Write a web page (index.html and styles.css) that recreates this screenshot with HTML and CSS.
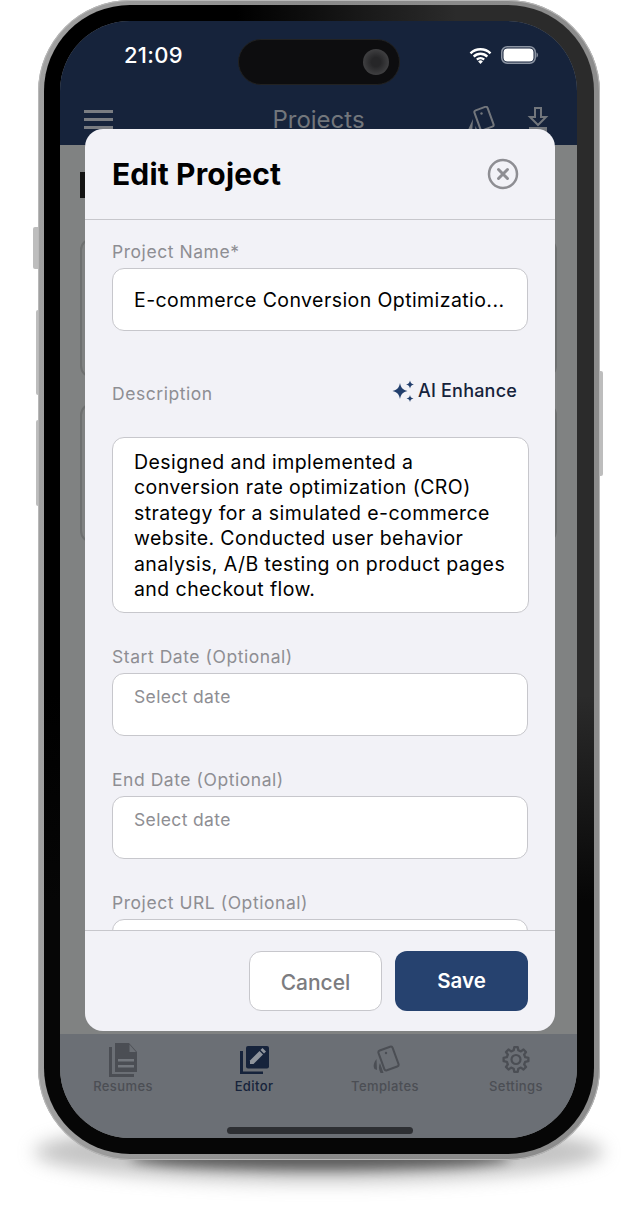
FILE: index.html
```html
<!DOCTYPE html>
<html lang="en">
<head>
<meta charset="utf-8">
<title>Edit Project</title>
<link rel="stylesheet" href="styles.css">
</head>
<body>
<div class="stage">
  <div class="floor-shadow"></div>
  <div class="floor-shadow-core"></div>
  <div class="side-btn btn-a"></div>
  <div class="side-btn btn-b"></div>
  <div class="side-btn btn-c"></div>
  <div class="side-btn btn-d"></div>
  <div class="phone">
    <div class="bezel">
      <div class="screen">
        <div class="navy">
          <div class="status">
            <span class="time">21:09</span>
            <div class="status-icons">
              <svg width="23" height="17" viewBox="0 0 23 17"><path d="M1.500 6.300a14.200 14.200 0 0 1 20 0M4.700 9.600a9.500 9.500 0 0 1 13.600 0M7.900 12.700a5 5 0 0 1 7.200 0" fill="none" stroke="#fff" stroke-width="2.400"/><path d="M11.500 17l-2.400-2.600a3.400 3.400 0 0 1 4.800 0z" fill="#fff"/></svg>
              <svg width="37" height="18" viewBox="0 0 37 18"><rect x="0.750" y="0.750" width="33.500" height="16.500" rx="5.500" fill="none" stroke="#8d95a3" stroke-width="1.500"/><rect x="2.500" y="2.500" width="30" height="13" rx="4" fill="#fff"/><path d="M35.500 6.500c1.900.5 1.900 4.500 0 5z" fill="#8d95a3"/></svg>
            </div>
          </div>
          <div class="island"><span class="lens"></span></div>
          <div class="appbar">
            <span class="burger"><i></i><i></i><i></i></span>
            <span class="appbar-title">Projects</span>
            <div class="appbar-icons">
              <svg width="30" height="30" viewBox="0 0 30 30"><rect x="-7" y="-10.500" width="14" height="21" rx="2" transform="translate(19 12.500) rotate(-20)" fill="none" stroke="#72767c" stroke-width="2"/><circle cx="16.500" cy="7.500" r="1.200" fill="#72767c"/><path d="M8 13l-6 13 5 2zM10.500 20l-1 8 4.500 0z" fill="#72767c"/></svg>
              <svg width="22" height="30" viewBox="0 0 22 30"><path d="M8 2h6v9h5l-8 8-8-8h5z" fill="none" stroke="#72767c" stroke-width="2"/><path d="M2 21h18v5H2z" fill="#72767c"/></svg>
            </div>
          </div>
        </div>
        <div class="page">
          <div class="page-title"></div>
          <div class="bg-card"></div>
          <div class="bg-card"></div>
        </div>
        <nav class="tabbar">
          <div class="tab">
            <svg width="30" height="34" viewBox="0 0 30 34"><path d="M1 4v30h25v-3H4V4z" fill="#4b4e54"/><path d="M7 0h14l8 9v20H7z" fill="#4b4e54"/><path d="M21.500 1.500v7.500h6.500z" fill="#6b6f75"/><path d="M10 16h16v2.500H10zM10 22h16v2.500H10z" fill="#73777d"/></svg>
            <span>Resumes</span>
          </div>
          <div class="tab tab-on">
            <svg width="30" height="34" viewBox="0 0 30 34"><path d="M1 8v23h23v-2.500H4V8z" fill="#16233b"/><rect x="7" y="3" width="23" height="22.500" rx="2" fill="#16233b"/><path d="M11 21v-3.500l9.500-9.500 3.500 3.500-9.500 9.500z" fill="#8f949c"/><path d="M21.500 7l2-2 3.500 3.500-2 2z" fill="#8f949c"/></svg>
            <span>Editor</span>
          </div>
          <div class="tab">
            <svg width="30" height="34" viewBox="0 0 30 34"><rect x="-7.500" y="-10.500" width="15" height="21" rx="2" transform="translate(18.500 15.500) rotate(-20)" fill="none" stroke="#4b4e54" stroke-width="2"/><circle cx="16" cy="10" r="1.200" fill="#4b4e54"/><path d="M6.500 16c-3 4-3.500 7-2 10l2.500 1zM10 20c-1.500 3-1.500 6 .5 10l3 0z" fill="#4b4e54"/></svg>
            <span>Templates</span>
          </div>
          <div class="tab">
            <svg width="30" height="34" viewBox="0 0 30 34"><g transform="translate(15 16.500)"><polygon points="1.740,-12.380 2.300,-9.220 4.890,-8.140 7.520,-9.980 9.980,-7.520 8.140,-4.890 9.220,-2.300 12.380,-1.740 12.380,1.740 9.220,2.300 8.140,4.890 9.980,7.520 7.520,9.980 4.890,8.140 2.300,9.220 1.740,12.380 -1.740,12.380 -2.300,9.220 -4.890,8.140 -7.520,9.980 -9.980,7.520 -8.140,4.890 -9.220,2.300 -12.380,1.740 -12.380,-1.740 -9.220,-2.300 -8.140,-4.890 -9.980,-7.520 -7.520,-9.980 -4.890,-8.140 -2.300,-9.220 -1.740,-12.380" fill="none" stroke="#4b4e54" stroke-width="2.300" stroke-linejoin="round"/><circle r="4.500" fill="none" stroke="#4b4e54" stroke-width="2.200"/></g></svg>
            <span>Settings</span>
          </div>
        </nav>
        <div class="home-bar"></div>
      </div>
    </div>
  </div>
  <section class="modal">
    <header class="modal-head">
      <h1>Edit Project</h1>
      <svg width="32" height="32" viewBox="0 0 32 32"><circle cx="16" cy="16" r="14" fill="none" stroke="#8e8e93" stroke-width="2.500"/><path d="M11.500 11.500l9 9m0-9l-9 9" stroke="#8e8e93" stroke-width="3" stroke-linecap="round"/></svg>
    </header>
    <div class="modal-body">
      <label class="label">Project Name*</label>
      <div class="field field-name">E-commerce Conversion Optimizatio...</div>
      <div class="desc-row">
        <label class="label">Description</label>
        <span class="enhance">
          <svg width="24" height="24" viewBox="0 0 24 24"><path d="M9 4c1 5 3 7 7.500 8-4.500 1-6.500 3-7.500 8-1-5-3-7-7.500-8 4.500-1 6.500-3 7.500-8z" fill="#223f6d"/><path d="M19 1.500c.5 2.500 1.500 3.500 4 4-2.500.5-3.500 1.500-4 4-.5-2.500-1.500-3.500-4-4 2.500-.5 3.500-1.500 4-4zM19 16c.5 2.200 1.300 3 3.500 3.500-2.200.5-3 1.300-3.500 3.500-.5-2.200-1.300-3-3.500-3.500 2.200-.5 3-1.300 3.500-3.500z" fill="#223f6d"/></svg>
          AI Enhance
        </span>
      </div>
      <div class="field field-area">Designed and implemented a conversion rate optimization (CRO) strategy for a simulated e-commerce website. Conducted user behavior analysis, A/B testing on product pages and checkout flow.</div>
      <label class="label label-next">Start Date (Optional)</label>
      <div class="field field-date">Select date</div>
      <label class="label label-next">End Date (Optional)</label>
      <div class="field field-date">Select date</div>
      <label class="label label-next">Project URL (Optional)</label>
      <div class="field field-date"></div>
    </div>
    <footer class="modal-foot">
      <button class="btn btn-cancel">Cancel</button>
      <button class="btn btn-save">Save</button>
    </footer>
  </section>
</div>
</body>
</html>
```
FILE: styles.css
```css
* { box-sizing: border-box; }
html, body { margin: 0; padding: 0; background: #fff; }
body { font-family: Inter, "Liberation Sans", sans-serif; }
.stage { position: relative; width: 634px; height: 1207px; overflow: hidden; }
.floor-shadow {
  position: absolute; left: 34px; top: 1122px; width: 570px; height: 60px;
  border-radius: 50%; background: #8a8a8a; filter: blur(9px); opacity: .5;
}
.floor-shadow-core {
  position: absolute; left: 130px; top: 1146px; width: 380px; height: 24px;
  border-radius: 50%; background: #333; filter: blur(6px); opacity: .7;
}
.side-btn { position: absolute; background: #bdbdbd; }
.btn-a { left: 33px; top: 227px; width: 6px; height: 42px; border-radius: 2px 0 0 2px; }
.btn-b { left: 36px; top: 310px; width: 3px; height: 85px; border-radius: 2px 0 0 2px; }
.btn-c { left: 36px; top: 420px; width: 3px; height: 86px; border-radius: 2px 0 0 2px; }
.btn-d { left: 598px; top: 371px; width: 5px; height: 105px; border-radius: 0 2px 2px 0; }
.phone {
  position: relative; margin-left: 38px; width: 562px; height: 1160px; padding: 5px 6px 6px;
  border-radius: 92px; background: linear-gradient(90deg, #a0a0a0, #8a8a8a 50%, #8c8c8c);
  box-shadow: inset 0 0 0 1px #b8b8b8;
}
.bezel {
  width: 100%; height: 100%; padding: 16px 17px 16px 16px;
  border-radius: 86px;
  background: linear-gradient(180deg, transparent 60%, #060606 78%), linear-gradient(90deg, #000 35%, #2b2b2b 75%);
}
.screen {
  position: relative; width: 100%; height: 100%; overflow: hidden;
  display: flex; flex-direction: column;
  border-radius: 70px; background: #808282;
}
.navy { position: relative; height: 124px; background: #16233b; flex: none; }
.status { display: flex; justify-content: space-between; align-items: center; padding: 22px 39px 0 64px; }
.time { color: #fff; font-size: 22px; font-weight: 500; line-height: 24px; letter-spacing: .3px; }
.status-icons { display: flex; align-items: center; gap: 9px; }
.island {
  position: absolute; left: 178px; top: 18px; width: 162px; height: 46px;
  border-radius: 23px; background: #0d0d0f; border: 1px solid #222;
}
.lens {
  position: absolute; left: 124px; top: 9px; width: 26px; height: 26px;
  border-radius: 50%; background: radial-gradient(circle, #262628 25%, #424244 75%);
}
.appbar { position: absolute; left: 0; right: 0; top: 85px; display: flex; align-items: flex-start; justify-content: space-between; padding: 0 28px 0 24px; }
.burger { display: flex; flex-direction: column; gap: 5px; width: 29px; padding-top: 4px; }
.burger i { display: block; height: 3px; background: #7a7d82; }
.appbar-title { position: absolute; left: 0; right: 0; text-align: center; color: #72767c; font-size: 24px; line-height: 28px; }
.appbar-icons { display: flex; gap: 32px; }
.page { flex: 1; padding: 27px 20px 0; background: #808282; }
.page-title { width: 5px; height: 26px; background: #141414; margin-bottom: 40px; }
.bg-card { height: 140px; border: 2px solid #6e7070; border-radius: 12px; margin-bottom: 25px; }
.tabbar { flex: none; height: 104px; padding: 9px 0 0 2px; display: flex; justify-content: center; background: #6b6f75; }
.tab { flex: none; width: 131px; display: flex; flex-direction: column; align-items: center; color: #4b4e54; font-size: 13px; letter-spacing: .4px; line-height: 16px; gap: 1px; font-weight: 500; }
.tab-on { color: #16233b; }
.home-bar { position: absolute; left: 167px; bottom: 4px; width: 186px; height: 7px; border-radius: 4px; background: #2d2f33; }
.modal {
  position: absolute; left: 85px; top: 129px; width: 470px; height: 902px;
  display: flex; flex-direction: column; overflow: hidden;
  border-radius: 18px; background: #f2f2f7;
}
.modal-head {
  flex: none; height: 91px; display: flex; align-items: center; justify-content: space-between;
  padding: 0 36px 0 27px; border-bottom: 1px solid #c7c7cc;
}
.modal-head h1 { margin: 0; font-size: 30px; line-height: 36px; font-weight: 700; color: #000; letter-spacing: .15px; }
.modal-body { flex: 1; min-height: 0; overflow: hidden; padding: 21px 27px 0; }
.label { display: block; color: #8e8e93; font-size: 17.500px; line-height: 22px; letter-spacing: .55px; }
.label-next { margin-top: 33px; margin-bottom: 5px; }
.field { background: #fff; border: 1px solid #c7c7cc; border-radius: 12px; color: #000; font-size: 19.500px; letter-spacing: .42px; padding: 0 21px; }
.field-name { height: 63px; margin-top: 5px; line-height: 63px; white-space: nowrap; }
.desc-row { display: flex; justify-content: space-between; align-items: flex-start; margin-top: 49px; height: 57px; padding-right: 11px; }
.desc-row .label { margin-top: 3px; }
.enhance { display: flex; align-items: center; gap: 3px; margin-top: -2px; margin-left: -2px; color: #16233b; font-size: 18px; font-weight: 500; line-height: 26px; letter-spacing: .2px; }
.field-area { height: 176px; width: 417px; padding-top: 12px; line-height: 25.400px; }
.field-date { height: 63px; color: #8e8e93; font-size: 17.500px; letter-spacing: .36px; padding-top: 12px; line-height: 22px; }
.modal-foot { flex: none; height: 101px; display: flex; justify-content: flex-end; gap: 13px; padding: 20px 27px 0 0; border-top: 1px solid #c7c7cc; }
.btn { width: 133px; height: 60px; border-radius: 12px; font: 600 20.500px Inter, "Liberation Sans", sans-serif; }
.btn-cancel { background: #fff; border: 1px solid #c7c7cc; color: #7c7c80; font-size: 21px; font-weight: 500; padding-top: 3px; }
.btn-save { background: #26426f; border: 0; color: #fff; padding-bottom: 2px; }
```
